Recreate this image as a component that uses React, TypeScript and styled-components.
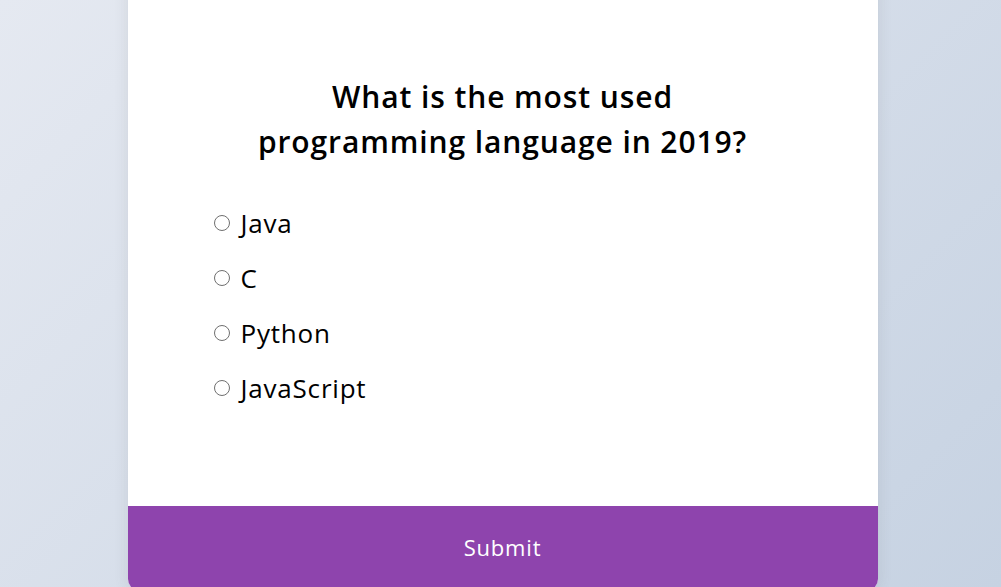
import React from "react";
import styled, { createGlobalStyle } from "styled-components";

const GlobalStyle = createGlobalStyle`
  * { box-sizing: border-box; }
  html, body { margin: 0; padding: 0; }
  body {
    height: 100vh;
    overflow: hidden;
    font-family: "Open Sans", "Noto Sans", sans-serif;
    background: linear-gradient(315deg, #c6d2e2 0%, #e5e9f1 100%);
  }
  #root { height: 100%; }
`;

const Stage = styled.div`
  height: 100vh;
  padding-left: 4px;
  display: flex;
  align-items: flex-end;
  justify-content: center;
`;

const Card = styled.div`
  flex: none;
  width: 750px;
  height: 620px;
  margin-bottom: -4px;
  background: #ffffff;
  border-radius: 12px;
  overflow: hidden;
  box-shadow: 0 0 12px 3px rgba(100, 100, 100, 0.1);
  display: flex;
  flex-direction: column;
`;

const Header = styled.div`
  flex: 1;
  padding: 83px 80px 0;
`;

const Title = styled.h2`
  margin: 0;
  padding: 20px 40px;
  text-align: center;
  font-size: 30px;
  line-height: 45px;
  font-weight: 600;
  letter-spacing: 0.9px;
  color: #000;
`;

const Options = styled.ul`
  list-style: none;
  margin: 21px 0 0;
  padding: 0;
  display: flex;
  flex-direction: column;
  gap: 19px;
`;

const Option = styled.li`
  display: flex;
  align-items: center;
  font-size: 26px;
  line-height: 36px;
  letter-spacing: 0.8px;
  color: #000;
`;

const Radio = styled.input.attrs({ type: "radio" })`
  appearance: none;
  width: 16px;
  height: 16px;
  margin: 0 11px 0 6px;
  border: 1px solid #6f6f6f;
  border-radius: 50%;
  background: #fff;
  flex: none;
`;

const Label = styled.label`
  cursor: pointer;
`;

const SubmitButton = styled.button`
  flex: none;
  display: block;
  width: 100%;
  height: 85px;
  padding: 0 0 4px;
  border: none;
  background: #8e44ad;
  color: #fff;
  font-family: inherit;
  font-size: 22px;
  letter-spacing: 0.8px;
  cursor: pointer;
`;

const answers = ["Java", "C", "Python", "JavaScript"];

export default function App() {
  return (
    <>
      <GlobalStyle />
      <Stage>
        <Card>
          <Header>
            <Title>What is the most used programming language in 2019?</Title>
            <Options>
              {answers.map((a, i) => (
                <Option key={a}>
                  <Radio id={`ans${i}`} name="answer" />
                  <Label htmlFor={`ans${i}`}>{a}</Label>
                </Option>
              ))}
            </Options>
          </Header>
          <SubmitButton>Submit</SubmitButton>
        </Card>
      </Stage>
    </>
  );
}
